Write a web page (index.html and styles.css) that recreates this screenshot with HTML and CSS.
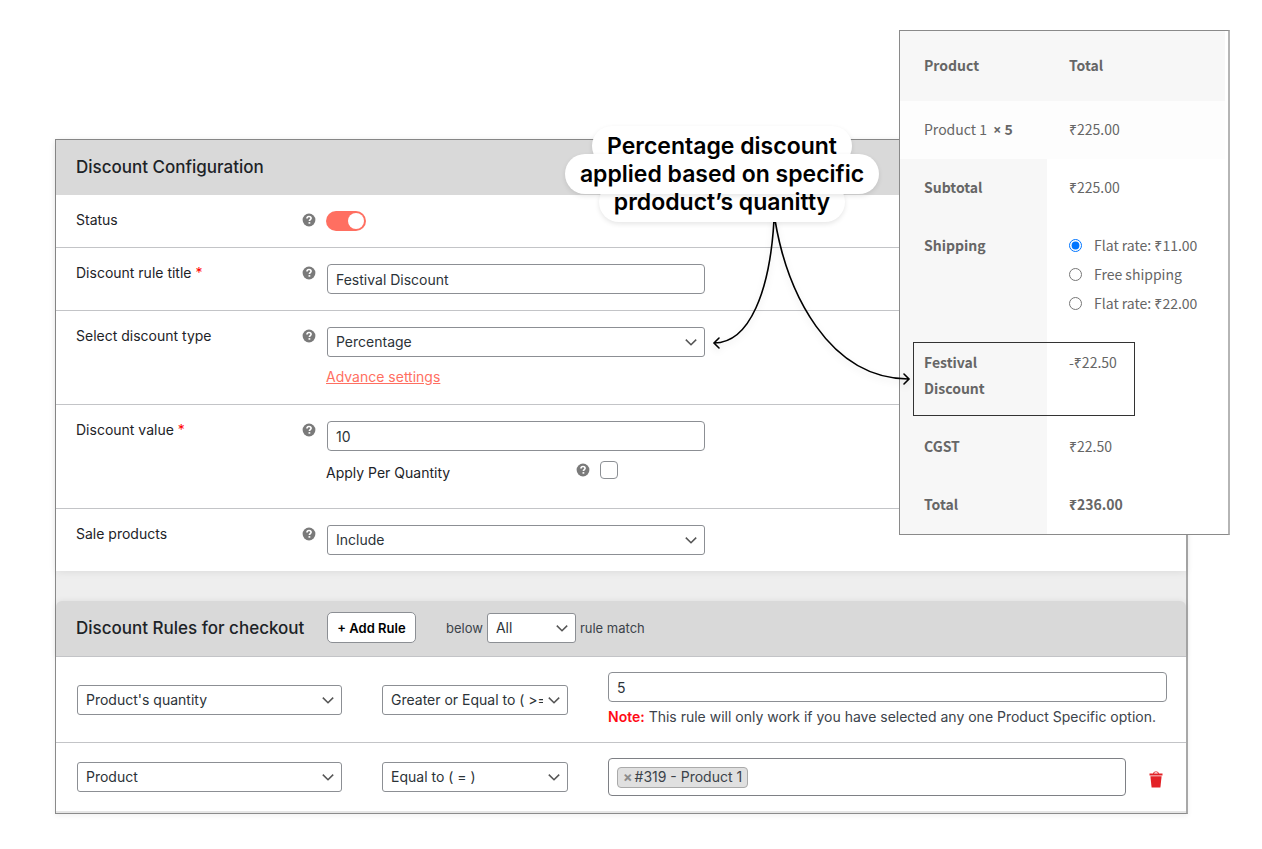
FILE: index.html
```html
<!DOCTYPE html>
<html lang="en">
<head>
<meta charset="utf-8">
<title>Discount Configuration</title>
<link rel="stylesheet" href="styles.css">
</head>
<body>
<svg class="sprite" aria-hidden="true">
  <symbol id="help" viewBox="0 0 14 14"><circle cx="7" cy="7" r="6.4" fill="#7a7a7a"/><path d="M5 5.4C5 4 6 3.5 7 3.5s2.1.6 2.1 1.8c0 1.3-1.7 1.3-1.7 2.7" fill="none" stroke="#fff" stroke-width="1.6"/><path d="M6.5 9.1h1.8v1.6H6.5z" fill="#fff"/></symbol>
</svg>
<main class="stage">
  <form class="panel">
    <section class="config">
      <header class="bar"><h2 class="title">Discount Configuration</h2></header>
      <div class="row">
        <label class="name" for="status">Status</label>
        <svg class="help"><use href="#help"/></svg>
        <div class="field"><input class="toggle" id="status" type="checkbox" checked></div>
      </div>
      <div class="row">
        <label class="name" for="title">Discount rule title <span class="req">*</span></label>
        <svg class="help"><use href="#help"/></svg>
        <div class="field"><input class="control" id="title" type="text" value="Festival Discount"></div>
      </div>
      <div class="row">
        <label class="name" for="type">Select discount type</label>
        <svg class="help"><use href="#help"/></svg>
        <div class="field">
          <select class="control select" id="type"><option>Percentage</option></select>
          <a class="advance" href="#advance">Advance settings</a>
        </div>
      </div>
      <div class="row">
        <label class="name" for="value">Discount value <span class="req">*</span></label>
        <svg class="help"><use href="#help"/></svg>
        <div class="field">
          <input class="control" id="value" type="text" value="10">
          <div class="per">
            <label class="per-label" for="per">Apply Per Quantity</label>
            <svg class="per-help"><use href="#help"/></svg>
            <input class="check" id="per" type="checkbox">
          </div>
        </div>
      </div>
      <div class="row">
        <label class="name" for="sale">Sale products</label>
        <svg class="help"><use href="#help"/></svg>
        <div class="field"><select class="control select" id="sale"><option>Include</option></select></div>
      </div>
    </section>
    <section class="rules">
      <header class="bar rules-bar">
        <h2 class="title">Discount Rules for checkout</h2>
        <button class="add" type="button">+ Add Rule</button>
        <div class="match">
          <label for="match">below</label>
          <select class="control select match-select" id="match"><option>All</option></select>
          <span>rule match</span>
        </div>
      </header>
      <div class="rule">
        <select class="control select" aria-label="Rule subject"><option>Product's quantity</option></select>
        <select class="control select" aria-label="Comparison"><option>Greater or Equal to ( &gt;= )</option></select>
        <div class="quantity">
          <input class="control" type="text" value="5" aria-label="Quantity">
          <p class="note"><strong>Note:</strong> This rule will only work if you have selected any one Product Specific option.</p>
        </div>
      </div>
      <div class="rule">
        <select class="control select" aria-label="Rule subject"><option>Product</option></select>
        <select class="control select" aria-label="Comparison"><option>Equal to ( = )</option></select>
        <div class="products">
          <div class="chips"><span class="chip"><button class="remove" type="button" aria-label="Remove product">×</button>#319 - Product 1</span></div>
          <button class="trash" type="button" aria-label="Delete rule">
            <svg width="14" height="17" viewBox="0 0 14 17" fill="#e32227"><path d="M.5 2.4h3.6C4.3 1 5.6.5 7 .5s2.7.5 2.9 1.9h3.6v2H.5zM5.1 2.4h3.8C8.7 1.6 8 1.300 7 1.300s-1.700.3-1.900 1.100z"/><path d="M1.400 5.300h11.200l-1.200 11.200H2.600z"/></svg>
          </button>
        </div>
      </div>
    </section>
  </form>

  <aside class="receipt">
    <table class="totals">
      <thead><tr><th>Product</th><th>Total</th></tr></thead>
      <tbody>
        <tr class="item"><td>Product 1&nbsp; <strong><span class="times">×</span> 5</strong></td><td>₹225.00</td></tr>
        <tr><th>Subtotal</th><td>₹225.00</td></tr>
        <tr class="shipping"><th>Shipping</th><td>
          <div class="rates">
            <label class="rate"><input type="radio" name="rate" checked>Flat rate: ₹11.00</label>
            <label class="rate"><input type="radio" name="rate">Free shipping</label>
            <label class="rate"><input type="radio" name="rate">Flat rate: ₹22.00</label>
          </div>
        </td></tr>
        <tr><th class="discount">Festival Discount</th><td>-₹22.50</td></tr>
        <tr><th>CGST</th><td>₹22.50</td></tr>
        <tr><th>Total</th><td><strong>₹236.00</strong></td></tr>
      </tbody>
    </table>
  </aside>

  <svg class="arrows" width="220" height="180" viewBox="700 215 220 180" aria-hidden="true">
    <path d="M774 220C770 290 750 343 714 343M719 338l-5 5 5 5M775 220C787 292 828 378 908 379M904 374l5 5-5 5"/>
  </svg>
  <p class="callout"><span>Percentage discount</span><span class="middle">applied based on specific</span><span>prdoduct’s quanitty</span></p>
</main>
</body>
</html>
```

FILE: styles.css
```css
*, *::before, *::after { box-sizing: border-box; }
body {
  margin: 0;
  background: #fff;
  color: #1d2327;
  font: 14px/20px Inter, "Liberation Sans", sans-serif;
}
.sprite { position: absolute; width: 0; height: 0; }
.stage { position: relative; padding: 139px 74px 35px 55px; }

.panel {
  border: 1px solid #8a8a8a;
  border-right: 2px solid #a8a8a8;
  background: #eee;
  box-shadow: 0 2px 5px rgba(0, 0, 0, .06);
}
.config { background: #fff; box-shadow: 0 1px 8px rgba(0, 0, 0, .08); }
.bar {
  display: flex;
  align-items: center;
  height: 55px;
  padding: 0 20px 2px;
  background: #d9d9d9;
}
.title { margin: 0; font-size: 17px; line-height: 24px; font-weight: 500; }

.row {
  display: grid;
  grid-template-columns: 226px 24px 1fr;
  padding: 16px 20px;
  border-bottom: 1px solid #c3c4c7;
}
.row:last-child { border-bottom: 0; }
.name, .help { margin-top: -1px; }
.req { color: #f00; }
.help { width: 14px; height: 20px; }
.field { display: flex; flex-direction: column; align-items: flex-start; }

.control {
  width: 100%;
  height: 30px;
  padding: 0 8px;
  border: 1px solid #8c8f94;
  border-radius: 4px;
  background: #fff;
  color: #2c3338;
  font: inherit;
}
.field > .control { width: 378px; margin-left: 1px; }
.select {
  appearance: none;
  padding-right: 24px;
  border-radius: 3px;
  background: #fff url("data:image/svg+xml,%3Csvg xmlns='http://www.w3.org/2000/svg' viewBox='0 0 20 20'%3E%3Cpath d='M3.5 7l6.5 6.5L16.5 7' fill='none' stroke='%23555' stroke-width='1.9'/%3E%3C/svg%3E") no-repeat right 5px center / 16px 16px;
}
.toggle {
  appearance: none;
  width: 40px;
  height: 20px;
  margin: 0;
  padding: 2px;
  border-radius: 10px;
  background: #ff6f61;
}
.toggle::before {
  content: "";
  display: block;
  width: 16px;
  height: 16px;
  margin-left: auto;
  border-radius: 50%;
  background: #fff;
}
.advance { margin-top: 9px; padding-bottom: 1px; line-height: 21px; color: #ff6f61; }
.per {
  display: grid;
  grid-template-columns: 250px 24px 19px;
  height: 31px;
  margin-top: 10px;
}
.per-label { padding-top: 2px; }
.per-help { width: 14px; height: 18px; }
.check {
  appearance: none;
  width: 18px;
  height: 18px;
  margin: 0;
  border: 1px solid #8c8f94;
  border-radius: 4px;
  background: #fff;
}

.rules { margin-top: 30px; border-bottom: 2px solid #e5e5e5; }
.rules-bar {
  height: 56px;
  border-bottom: 1px solid #c3c4c7;
  border-radius: 6px 6px 0 0;
  box-shadow: 0 0 6px rgba(0, 0, 0, .08);
}
.rules-bar .title { width: 251px; }
.add {
  width: 89px;
  height: 31px;
  padding: 0;
  border: 1px solid #8c8f94;
  border-radius: 5px;
  background: #fff;
  color: #000;
  font: 600 13px/20px Inter, "Liberation Sans", sans-serif;
}
.match {
  display: flex;
  align-items: center;
  gap: 4px;
  margin-left: 30px;
  color: #3c434a;
  font-size: 13px;
}
.match-select { width: 89px; font-size: 14px; }

.rule {
  display: grid;
  grid-template-columns: 265px 186px 1fr;
  column-gap: 40px;
  align-items: center;
  padding: 15px 19px 15px 21px;
  border-bottom: 1px solid #c3c4c7;
  background: #fff;
}
.rule:last-child { border-bottom: 0; }
.note { margin: 5px 0 0; color: #3c434a; }
.note strong { color: #ff0a16; font-weight: 600; }
.products { display: flex; align-items: center; gap: 18px; }
.chips {
  flex: 1;
  display: flex;
  align-items: center;
  height: 38px;
  padding: 0 8px;
  border: 1px solid #7e8085;
  border-radius: 4px;
}
.chip {
  display: flex;
  align-items: center;
  height: 21px;
  padding: 0 5px;
  border: 1px solid #aaa;
  border-radius: 4px;
  background: #e0e0e0;
  color: #3c434a;
}
.remove {
  padding: 0 2px 0 0;
  border: 0;
  background: none;
  color: #8c8c8c;
  font: 700 14px/20px Inter, sans-serif;
}
.trash { width: 23px; padding: 4px 0 0; border: 0; background: none; line-height: 0; }

.receipt {
  position: absolute;
  left: 899px;
  top: 30px;
  width: 331px;
  padding-right: 3px;
  border: 1px solid #8a8a8a;
  border-right: 2px solid #b5b5b5;
  background: #fff;
  color: #666;
  font: 14px/26px "Noto Sans CJK SC", "Noto Sans", sans-serif;
}
.totals { width: 100%; border-collapse: collapse; table-layout: fixed; }
.totals th, .totals td { padding: 15px 0 17px 22px; text-align: left; vertical-align: top; }
.totals th { padding-left: 24px; padding-right: 40px; background: #f7f7f7; }
.totals th:first-child { width: 147px; }
.totals .item td { background: #fdfdfd; }
.totals .item td:first-child { padding-left: 24px; }
.totals thead th { padding-top: 21px; padding-bottom: 23px; }
.totals thead th:last-child { padding-left: 22px; padding-right: 0; }
.totals .shipping { height: 117px; }
.times { font-family: "Open Sans", sans-serif; line-height: 1; }
.rates { display: flex; flex-direction: column; gap: 3px; }
.rate { display: flex; align-items: center; gap: 12px; }
.rate input { width: 13px; height: 13px; margin: 0; }
.discount { position: relative; }
.discount::after {
  content: "";
  position: absolute;
  z-index: 1;
  left: 13px;
  top: 8px;
  width: 222px;
  height: 74px;
  border: 1px solid #333;
}

.arrows {
  position: absolute;
  left: 700px;
  top: 215px;
  fill: none;
  stroke: #000;
  stroke-width: 1.6;
  stroke-linecap: round;
  filter: drop-shadow(0 3px 3px rgba(0, 0, 0, .1));
}
.callout {
  position: absolute;
  left: 562px;
  top: 132px;
  width: 320px;
  margin: 0;
  display: flex;
  flex-direction: column;
  align-items: center;
  isolation: isolate;
  color: #000;
  font-size: 23px;
  line-height: 28px;
  font-weight: 600;
}
.callout span { position: relative; padding: 0 15px; white-space: nowrap; }
.callout span::before {
  content: "";
  position: absolute;
  inset: -6px 0;
  z-index: -2;
  border-radius: 20px;
  background: #fff;
  box-shadow: 0 2px 5px rgba(0, 0, 0, .1);
}
.callout .middle::before { z-index: -1; }
```
